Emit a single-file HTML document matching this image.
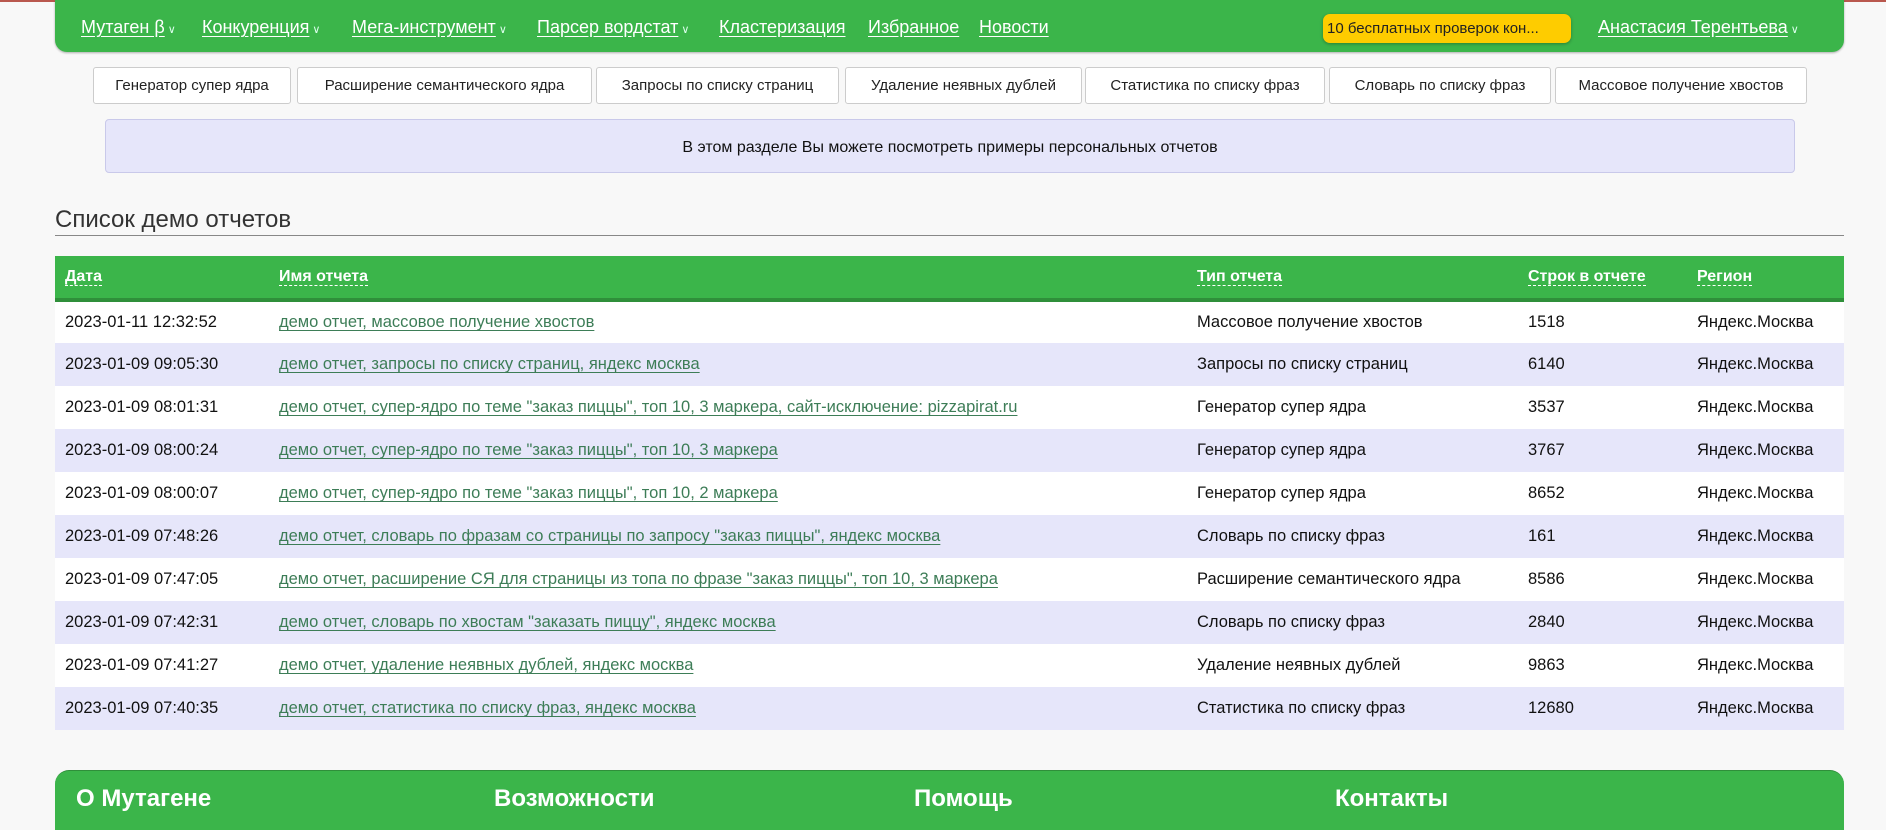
<!DOCTYPE html>
<html><head><meta charset="utf-8"><style>
*{box-sizing:border-box;margin:0;padding:0}
body{width:1886px;height:794px;overflow:hidden;background:#f8f8f8;font-family:"Liberation Sans",sans-serif;color:#111;position:relative}
.topline{position:absolute;left:0;top:0;width:1886px;height:2px;background:#b9584e}
.nav{position:absolute;left:55px;top:0;width:1789px;height:52px;background:#3bb54a;border-radius:0 0 12px 12px;box-shadow:0 1px 2px rgba(0,0,0,.3)}
.nav a{position:absolute;top:17px;color:#fff;font-size:18px;text-decoration:underline;text-underline-offset:3px;white-space:nowrap}
.nav .c{font-size:11px;color:#dfe;margin-left:3px;text-decoration:none;display:inline-block}
.badge{position:absolute;left:1268px;top:14px;width:248px;height:29px;background:#fecc00;border-radius:7px;font-size:15px;color:#222;line-height:29px;padding-left:4px;box-shadow:0 1px 3px rgba(0,0,0,.3);white-space:nowrap}
.btn{position:absolute;top:67px;height:37px;background:#fff;border:1px solid #ccc;border-radius:3px;font-size:15px;line-height:35px;text-align:center;color:#222;white-space:nowrap}
.info{position:absolute;left:105px;top:119px;width:1690px;height:54px;background:#e6e6fa;border:1px solid #c9c9ea;border-radius:4px;font-size:16px;line-height:56px;text-align:center}
h2{position:absolute;left:55px;top:206px;font-weight:normal;font-size:24px;color:#333}
.hr{position:absolute;left:55px;top:235px;width:1789px;height:1px;background:#888}
table{position:absolute;left:55px;top:256px;width:1789px;border-collapse:collapse;font-size:16.5px}
th{background:#3bb54a;height:44px;text-align:left;color:#fff;font-size:16px;border-bottom:4px solid #2f8f3a;padding-left:10px}
th span{border-bottom:1px dashed #fff}
td{height:43px;padding-left:10px;white-space:nowrap}
tr:nth-child(odd) td{background:#e6e6fa}
tr:nth-child(even) td{background:#fff}
td a{color:#3d7d57;text-decoration:underline;text-underline-offset:3px}
.foot{position:absolute;left:55px;top:770px;width:1789px;height:60px;background:#3bb54a;border-radius:14px 14px 0 0;border-top:1px solid #2f8f3a}
.foot span{position:absolute;top:14px;color:#fff;font-size:24px;font-weight:bold}
</style></head><body>
<div class="topline"></div>
<div class="nav">
<a style="left:26px">Мутаген β<span class="c">∨</span></a>
<a style="left:147px">Конкуренция<span class="c">∨</span></a>
<a style="left:297px">Мега-инструмент<span class="c">∨</span></a>
<a style="left:482px">Парсер вордстат<span class="c">∨</span></a>
<a style="left:664px">Кластеризация</a>
<a style="left:813px">Избранное</a>
<a style="left:924px">Новости</a>
<div class="badge">10 бесплатных проверок кон...</div>
<a style="left:1543px">Анастасия Терентьева<span class="c">∨</span></a>
</div>
<div class="btn" style="left:93px;width:198px">Генератор супер ядра</div>
<div class="btn" style="left:297px;width:295px">Расширение семантического ядра</div>
<div class="btn" style="left:596px;width:243px">Запросы по списку страниц</div>
<div class="btn" style="left:845px;width:237px">Удаление неявных дублей</div>
<div class="btn" style="left:1085px;width:240px">Статистика по списку фраз</div>
<div class="btn" style="left:1329px;width:222px">Словарь по списку фраз</div>
<div class="btn" style="left:1555px;width:252px">Массовое получение хвостов</div>
<div class="info">В этом разделе Вы можете посмотреть примеры персональных отчетов</div>
<h2>Список демо отчетов</h2>
<div class="hr"></div>
<table>
<tr><th style="width:214px"><span>Дата</span></th><th style="width:918px"><span>Имя отчета</span></th><th style="width:331px"><span>Тип отчета</span></th><th style="width:169px"><span>Строк в отчете</span></th><th><span>Регион</span></th></tr>
<tr><td>2023-01-11 12:32:52</td><td><a>демо отчет, массовое получение хвостов</a></td><td>Массовое получение хвостов</td><td>1518</td><td>Яндекс.Москва</td></tr>
<tr><td>2023-01-09 09:05:30</td><td><a>демо отчет, запросы по списку страниц, яндекс москва</a></td><td>Запросы по списку страниц</td><td>6140</td><td>Яндекс.Москва</td></tr>
<tr><td>2023-01-09 08:01:31</td><td><a>демо отчет, супер-ядро по теме "заказ пиццы", топ 10, 3 маркера, сайт-исключение: pizzapirat.ru</a></td><td>Генератор супер ядра</td><td>3537</td><td>Яндекс.Москва</td></tr>
<tr><td>2023-01-09 08:00:24</td><td><a>демо отчет, супер-ядро по теме "заказ пиццы", топ 10, 3 маркера</a></td><td>Генератор супер ядра</td><td>3767</td><td>Яндекс.Москва</td></tr>
<tr><td>2023-01-09 08:00:07</td><td><a>демо отчет, супер-ядро по теме "заказ пиццы", топ 10, 2 маркера</a></td><td>Генератор супер ядра</td><td>8652</td><td>Яндекс.Москва</td></tr>
<tr><td>2023-01-09 07:48:26</td><td><a>демо отчет, словарь по фразам со страницы по запросу "заказ пиццы", яндекс москва</a></td><td>Словарь по списку фраз</td><td>161</td><td>Яндекс.Москва</td></tr>
<tr><td>2023-01-09 07:47:05</td><td><a>демо отчет, расширение СЯ для страницы из топа по фразе "заказ пиццы", топ 10, 3 маркера</a></td><td>Расширение семантического ядра</td><td>8586</td><td>Яндекс.Москва</td></tr>
<tr><td>2023-01-09 07:42:31</td><td><a>демо отчет, словарь по хвостам "заказать пиццу", яндекс москва</a></td><td>Словарь по списку фраз</td><td>2840</td><td>Яндекс.Москва</td></tr>
<tr><td>2023-01-09 07:41:27</td><td><a>демо отчет, удаление неявных дублей, яндекс москва</a></td><td>Удаление неявных дублей</td><td>9863</td><td>Яндекс.Москва</td></tr>
<tr><td>2023-01-09 07:40:35</td><td><a>демо отчет, статистика по списку фраз, яндекс москва</a></td><td>Статистика по списку фраз</td><td>12680</td><td>Яндекс.Москва</td></tr>
</table>
<div class="foot">
<span style="left:21px">О Мутагене</span>
<span style="left:439px">Возможности</span>
<span style="left:859px">Помощь</span>
<span style="left:1280px">Контакты</span>
</div>
</body></html>
